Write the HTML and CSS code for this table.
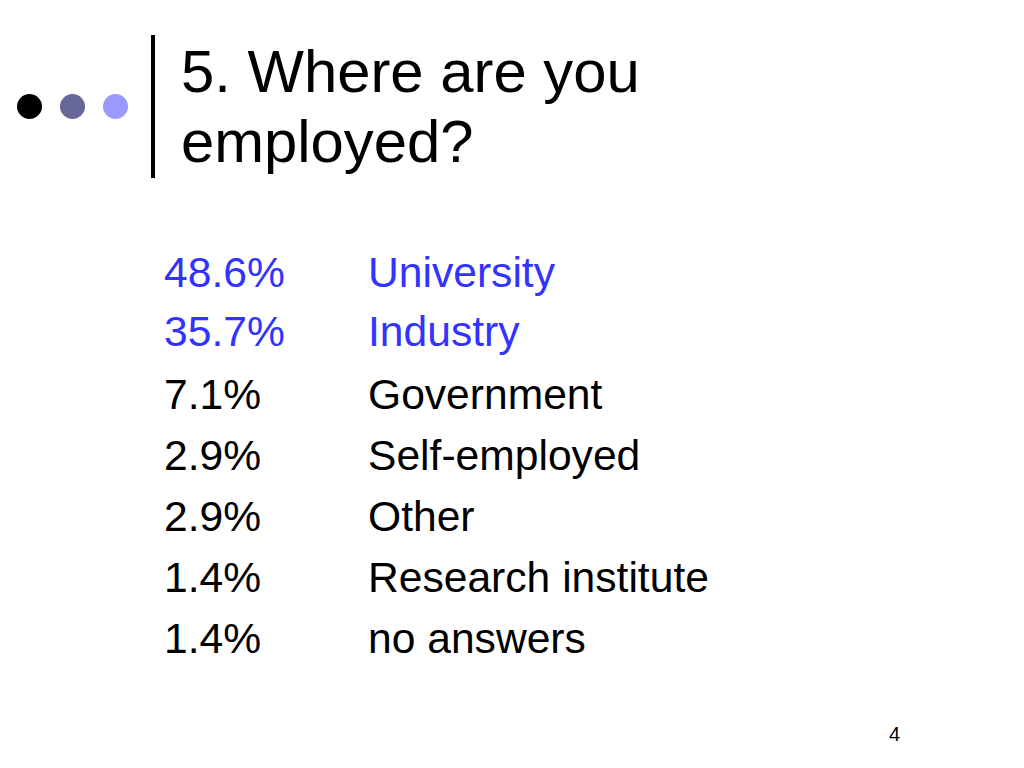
FILE: index.html
```html
<!DOCTYPE html>
<html lang="en">
<head>
<meta charset="utf-8">
<title>5. Where are you employed?</title>
<link rel="stylesheet" href="styles.css">
</head>
<body>
<div class="slide">
  <header class="head">
    <div class="dots">
      <span class="dot dot-1"></span>
      <span class="dot dot-2"></span>
      <span class="dot dot-3"></span>
    </div>
    <div class="bar"></div>
    <h1 class="title">5. Where are you<br>employed?</h1>
  </header>
  <div class="list">
    <div class="group group-blue">
      <div class="row"><span class="pct">48.6%</span><span class="label">University</span></div>
      <div class="row"><span class="pct">35.7%</span><span class="label">Industry</span></div>
    </div>
    <div class="group group-black">
      <div class="row"><span class="pct">7.1%</span><span class="label">Government</span></div>
      <div class="row"><span class="pct">2.9%</span><span class="label">Self-employed</span></div>
      <div class="row"><span class="pct">2.9%</span><span class="label">Other</span></div>
      <div class="row"><span class="pct">1.4%</span><span class="label">Research institute</span></div>
      <div class="row"><span class="pct">1.4%</span><span class="label">no answers</span></div>
    </div>
  </div>
  <footer class="foot">4</footer>
</div>
</body>
</html>
```

FILE: styles.css
```css
html, body {
  margin: 0;
  padding: 0;
  background: #ffffff;
}

.slide {
  width: 1024px;
  height: 768px;
  box-sizing: border-box;
  display: flex;
  flex-direction: column;
  font-family: "Liberation Sans", Arial, sans-serif;
  color: #000000;
  padding-bottom: 22px;
}

.head {
  display: flex;
  align-items: center;
  padding-top: 35px;
  padding-left: 17px;
}

.dots {
  display: flex;
  gap: 18px;
}

.dot {
  width: 25px;
  height: 25px;
  border-radius: 50%;
  display: block;
}

.dot-1 { background: #000000; }
.dot-2 { background: #666699; }
.dot-3 { background: #9999ff; }

.bar {
  width: 4px;
  height: 143px;
  background: #000000;
  margin-left: 23px;
}

.title {
  margin: 0 0 0 26px;
  font-weight: normal;
  font-size: 59.8px;
  line-height: 70px;
}

.list {
  margin-top: 65px;
  padding-left: 164px;
  font-size: 42.6px;
}

.group-blue {
  color: #3333ff;
  line-height: 59px;
}

.group-black {
  margin-top: 3px;
  line-height: 61px;
}

.row {
  display: flex;
}

.pct {
  width: 204px;
}

.foot {
  margin-top: auto;
  text-align: right;
  padding-right: 124px;
  font-size: 20px;
  line-height: 24px;
}
```
